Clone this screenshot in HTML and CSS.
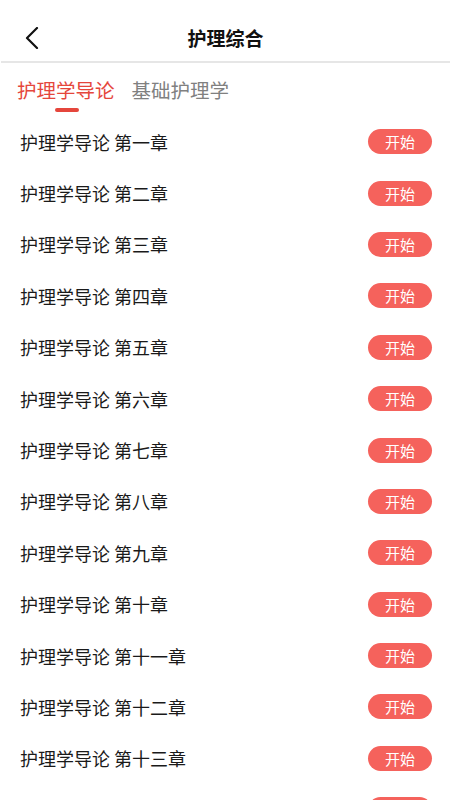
FILE: index.html
```html
<!DOCTYPE html>
<html lang="zh-CN">
<head>
  <meta charset="UTF-8">
  <meta name="viewport" content="width=device-width, initial-scale=1.0">
  <title>护理综合</title>
  <link rel="stylesheet" href="styles.css">
</head>
<body>
  <header class="topbar">
    <svg class="back" width="14" height="22" viewBox="0 0 14 22">
      <path d="M12 1 L2 11 L12 21" fill="none" stroke="#111" stroke-width="2.2" stroke-linecap="round" stroke-linejoin="round"/>
    </svg>
    <h1>护理综合</h1>
  </header>

  <nav class="tabs">
    <div class="tab active">护理学导论</div>
    <div class="tab">基础护理学</div>
  </nav>

  <ul class="chapters">
    <li><span>护理学导论 第一章</span><button>开始</button></li>
    <li><span>护理学导论 第二章</span><button>开始</button></li>
    <li><span>护理学导论 第三章</span><button>开始</button></li>
    <li><span>护理学导论 第四章</span><button>开始</button></li>
    <li><span>护理学导论 第五章</span><button>开始</button></li>
    <li><span>护理学导论 第六章</span><button>开始</button></li>
    <li><span>护理学导论 第七章</span><button>开始</button></li>
    <li><span>护理学导论 第八章</span><button>开始</button></li>
    <li><span>护理学导论 第九章</span><button>开始</button></li>
    <li><span>护理学导论 第十章</span><button>开始</button></li>
    <li><span>护理学导论 第十一章</span><button>开始</button></li>
    <li><span>护理学导论 第十二章</span><button>开始</button></li>
    <li><span>护理学导论 第十三章</span><button>开始</button></li>
    <li><span>护理学导论 第十四章</span><button>开始</button></li>
  </ul>
</body>
</html>
```

FILE: styles.css
```css
body {
  margin: 0;
  font-family: "Noto Sans CJK SC", "Noto Sans", sans-serif;
  background: #fff;
  color: #1a1a1a;
  overflow: hidden;
}
.topbar {
  height: 61px;
  display: flex;
  align-items: center;
  justify-content: center;
  position: relative;
  border-bottom: 2px solid #e6e6e6;
  margin-left: 1px;
}
.back {
  position: absolute;
  left: 24px;
  top: 27px;
}
.topbar h1 {
  margin: 0;
  font-size: 19px;
  font-weight: bold;
  color: #111;
  padding-top: 14px;
}
.tabs {
  display: flex;
  gap: 17px;
  padding: 0 17px;
  height: 53px;
}
.tab {
  font-size: 19.5px;
  color: #808080;
  line-height: 1;
  padding-top: 17px;
  position: relative;
}
.tab.active {
  color: #e5463c;
}
.tab.active::after {
  content: "";
  position: absolute;
  left: 38px;
  top: 45px;
  width: 24px;
  height: 4px;
  border-radius: 2px;
  background: #e5463c;
}
.chapters {
  list-style: none;
  margin: 0;
  padding: 0;
}
.chapters li {
  height: 51.4px;
  display: flex;
  align-items: center;
  justify-content: space-between;
  padding: 0 18px 0 20px;
  font-size: 18px;
}
.chapters button {
  width: 64px;
  height: 25px;
  border: none;
  border-radius: 13px;
  background: #f5625c;
  color: #fff;
  font-family: inherit;
  font-size: 15px;
  padding: 0;
}
```
